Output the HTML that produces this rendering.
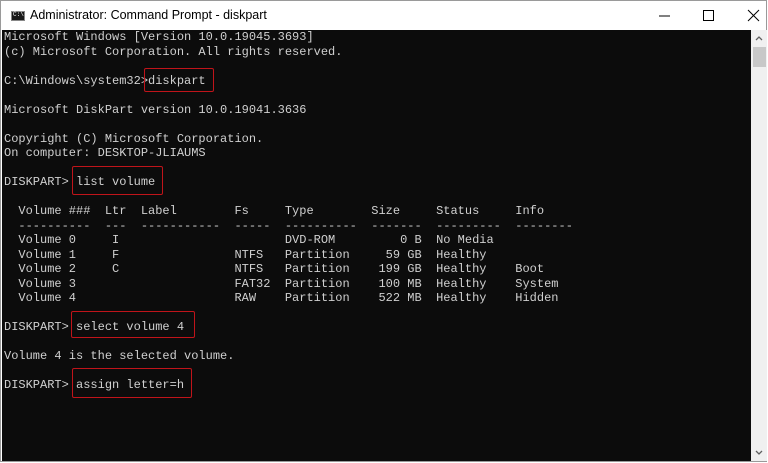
<!DOCTYPE html>
<html><head><meta charset="utf-8"><style>
body{margin:0;width:768px;height:463px;background:#fff;overflow:hidden;position:relative;font-family:"Liberation Sans",sans-serif}
.win{position:absolute;left:0;top:0;width:767px;height:462px;border:1px solid #9a9a9a;box-sizing:border-box;background:#fff}
.title{position:absolute;left:0;top:0;width:768px;height:29px}
.title .t{position:absolute;left:29px;top:7px;font-size:12.5px;color:#000}
.ico{position:absolute;left:10px;top:10px;width:14px;height:10px;background:#1a1a1a;border:1px solid #888;box-sizing:border-box}
.ico:after{content:"C:\\";position:absolute;left:1px;top:-1px;font-size:6px;color:#fff;font-family:"Liberation Mono",monospace}
.term{position:absolute;left:1px;top:29px;width:749px;height:431px;background:#0c0c0c}
.sb{position:absolute;left:750px;top:29px;width:16px;height:431px;background:#f0f0f0}
.thumb{position:absolute;left:752px;top:46px;width:13px;height:20px;background:#c8c8c8}
pre{position:absolute;left:3px;top:29px;margin:0;font-family:"Liberation Mono",monospace;font-size:12px;line-height:14.5px;color:#d0d0d0}
.box{position:absolute;border:1px solid #c0141a;border-radius:2px}
</style></head><body>
<div class="win">
<div class="title"><div class="ico"></div><div class="t">Administrator: Command Prompt - diskpart</div>
<svg style="position:absolute;left:650px;top:8px" width="110" height="14"><line x1="8" y1="7" x2="19" y2="7" stroke="#000"/><rect x="52.5" y="1.5" width="10" height="10" fill="none" stroke="#000"/><path d="M97 1L108 12M108 1L97 12" stroke="#000"/></svg>
</div>
<div class="term"></div>
<div class="sb"></div><div class="thumb"></div>
<svg style="position:absolute;left:753px;top:33px" width="10" height="8"><path d="M2 6L5 3L8 6" stroke="#606060" fill="none" stroke-width="1.3"/></svg>
<svg style="position:absolute;left:753px;top:448px" width="10" height="8"><path d="M2 2L5 5L8 2" stroke="#606060" fill="none" stroke-width="1.3"/></svg>
<pre>Microsoft Windows [Version 10.0.19045.3693]
(c) Microsoft Corporation. All rights reserved.

C:\Windows\system32&gt;diskpart

Microsoft DiskPart version 10.0.19041.3636

Copyright (C) Microsoft Corporation.
On computer: DESKTOP-JLIAUMS

DISKPART&gt; list volume

  Volume ###  Ltr  Label        Fs     Type        Size     Status     Info
  ----------  ---  -----------  -----  ----------  -------  ---------  --------
  Volume 0     I                       DVD-ROM         0 B  No Media
  Volume 1     F                NTFS   Partition     59 GB  Healthy
  Volume 2     C                NTFS   Partition    199 GB  Healthy    Boot
  Volume 3                      FAT32  Partition    100 MB  Healthy    System
  Volume 4                      RAW    Partition    522 MB  Healthy    Hidden

DISKPART&gt; select volume 4

Volume 4 is the selected volume.

DISKPART&gt; assign letter=h</pre>
<div class="box" style="left:143px;top:67px;width:68px;height:22px"></div>
<div class="box" style="left:71px;top:165px;width:89px;height:27px"></div>
<div class="box" style="left:70px;top:310px;width:122px;height:25px"></div>
<div class="box" style="left:71px;top:367px;width:118px;height:28px"></div>
</div>
</body></html>
